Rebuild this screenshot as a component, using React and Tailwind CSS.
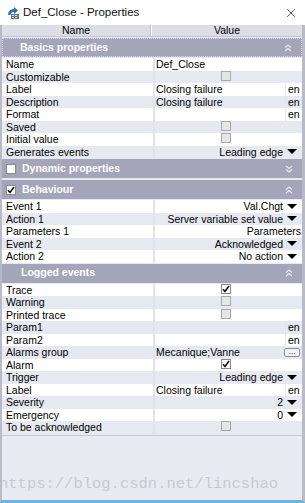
import { X } from 'lucide-react';

const rowsBasics = [
  { name: 'Name', kind: 'text', value: 'Def_Close' },
  { name: 'Customizable', kind: 'check' },
  { name: 'Label', kind: 'lang', value: 'Closing failure' },
  { name: 'Description', kind: 'lang', value: 'Closing failure' },
  { name: 'Format', kind: 'lang', value: '' },
  { name: 'Saved', kind: 'check' },
  { name: 'Initial value', kind: 'check' },
  { name: 'Generates events', kind: 'drop', value: 'Leading edge' },
];

const rowsBehaviour = [
  { name: 'Event 1', kind: 'drop', value: 'Val.Chgt' },
  { name: 'Action 1', kind: 'drop', value: 'Server variable set value' },
  { name: 'Parameters 1', kind: 'right', value: 'Parameters' },
  { name: 'Event 2', kind: 'drop', value: 'Acknowledged' },
  { name: 'Action 2', kind: 'drop', value: 'No action' },
];

const rowsLogged = [
  { name: 'Trace', kind: 'check', checked: true },
  { name: 'Warning', kind: 'check' },
  { name: 'Printed trace', kind: 'check' },
  { name: 'Param1', kind: 'lang', value: '' },
  { name: 'Param2', kind: 'lang', value: '' },
  { name: 'Alarms group', kind: 'more', value: 'Mecanique;Vanne' },
  { name: 'Alarm', kind: 'check', checked: true },
  { name: 'Trigger', kind: 'drop', value: 'Leading edge' },
  { name: 'Label', kind: 'lang', value: 'Closing failure' },
  { name: 'Severity', kind: 'drop', value: '2' },
  { name: 'Emergency', kind: 'drop', value: '0' },
  { name: 'To be acknowledged', kind: 'check' },
];

function Box({ checked, white }) {
  return (
    <span className={`w-[10px] h-[10px] border flex items-center justify-center ${white ? 'bg-white border-[#8a8a8a]' : 'bg-[#e6e6e6] border-[#a8a8a8]'}`}>
      {checked && (
        <svg width="8" height="8" viewBox="0 0 8 8">
          <path d="M1 4.2 L3 6.5 L7 1" stroke="#111" strokeWidth="1.6" fill="none" />
        </svg>
      )}
    </span>
  );
}

function Arrow() {
  return <span className="ml-[4px] w-0 h-0 border-l-[5px] border-r-[5px] border-t-[5px] border-l-transparent border-r-transparent border-t-black" />;
}

function Chevrons({ down }) {
  return (
    <svg width="8" height="8" viewBox="0 0 8 8" className="mr-[9px]">
      {down ? (
        <g stroke="#ececf2" strokeWidth="1.1" fill="none">
          <path d="M1 1 L4 3.5 L7 1" />
          <path d="M1 4.5 L4 7 L7 4.5" />
        </g>
      ) : (
        <g stroke="#ececf2" strokeWidth="1.1" fill="none">
          <path d="M1 3.5 L4 1 L7 3.5" />
          <path d="M1 7 L4 4.5 L7 7" />
        </g>
      )}
    </svg>
  );
}

function Section({ title, box, checked, down, focused }) {
  return (
    <div className="h-[21px] py-px">
      <div className={`h-[19px] bg-[#a4a5b9] flex items-center ${focused ? 'border border-dotted border-[#d4d4e0]' : ''}`}>
        {box ? (
          <span className="ml-[4px] mr-[6px]"><Box checked={checked} white /></span>
        ) : (
          <span className={focused ? 'w-[17px]' : 'w-[19px]'} />
        )}
        <span className="flex-1 text-white font-bold text-[10.5px]">{title}</span>
        <Chevrons down={down} />
      </div>
    </div>
  );
}

function Row({ r, i }) {
  const bg = i % 2 === 0 ? 'bg-white' : 'bg-[#e7e9f0]';
  let value = null;
  if (r.kind === 'text') value = <span className="pl-[1px]">{r.value}</span>;
  if (r.kind === 'check') value = <div className="flex-1 flex justify-center pr-[6px]"><Box checked={r.checked} white={r.checked} /></div>;
  if (r.kind === 'lang') value = (
    <div className="flex-1 flex">
      <span className="flex-1 pl-[1px]">{r.value}</span>
      <span className="w-[17px] pl-[2px] border-l border-[#e3e5ec]">en</span>
    </div>
  );
  if (r.kind === 'drop') value = (
    <div className="flex-1 flex items-center justify-end pr-[5px]">
      <span>{r.value}</span>
      <Arrow />
    </div>
  );
  if (r.kind === 'right') value = <div className="flex-1 text-right pr-[1px]">{r.value}</div>;
  if (r.kind === 'more') value = (
    <div className="flex-1 flex items-center">
      <span className="flex-1 pl-[1px]">{r.value}</span>
      <span className="mr-[2px] w-[16px] h-[9px] border border-[#8c8c8c] rounded-[2px] bg-[#f2f2f2] text-[8px] leading-[5px] text-center">...</span>
    </div>
  );
  return (
    <div className="h-[12.5px] flex text-[10.5px] leading-[12px] text-black">
      <div className={`w-[151px] pl-[4px] ${bg} truncate`}>{r.name}</div>
      <div className="w-[2px] bg-[#e2e3ea]" />
      <div className={`flex-1 flex ${bg}`}>{value}</div>
    </div>
  );
}

export default function App() {
  return (
    <div className="w-[305px] h-[503px] bg-[#e8eaf2] flex flex-col overflow-hidden" style={{ fontFamily: '"Liberation Sans", Arial, sans-serif' }}>
      <div className="h-[25px] bg-white flex items-center shrink-0">
        <svg width="14" height="14" viewBox="0 0 14 14" className="ml-[6px] mr-[3px]">
          <path d="M2 9 Q2 3 8 3 L8 1 L12 4.5 L8 8 L8 6 Q5 6 4.5 9 Z" fill="#2f6fc0" />
          <rect x="5" y="8" width="8" height="5" fill="#6d7380" />
          <path d="M6 9 h2 v1 h-2 z M9 9 h2 v1 h-2 z M6 11 h2 v1 h-2 z M9 11 h2 v1 h-2 z" fill="#d8dbe2" />
        </svg>
        <span className="flex-1 text-[11.5px] text-[#111]">Def_Close - Properties</span>
        <X size={14} strokeWidth={1.3} className="mr-[7px] text-[#222]" />
      </div>
      <div className="flex-1 flex flex-col border-l-2 border-r-[3px] border-[#b9bac6] border-b-[3px] border-b-[#6cb4de]">
        <div className="h-[12px] flex bg-[#dcdde5] border-b border-[#c4c5d0] text-[10.5px] leading-[11px] text-black shrink-0">
          <div className="w-[149px] text-center border-r border-[#c4c5d0]">Name</div>
          <div className="w-px bg-white" />
          <div className="flex-1 text-center">Value</div>
        </div>
        <Section title="Basics properties" focused />
        {rowsBasics.map((r, i) => <Row key={r.name} r={r} i={i} />)}
        <Section title="Dynamic properties" box down />
        <Section title="Behaviour" box checked />
        {rowsBehaviour.map((r, i) => <Row key={r.name} r={r} i={i} />)}
        <Section title="Logged events" />
        {rowsLogged.map((r, i) => <Row key={r.name + i} r={r} i={i} />)}
        <div className="h-px bg-[#c9cad4] mt-[1px]" />
        <div className="flex-1 flex items-end overflow-hidden">
          <div className="ml-[-3px] mb-[4px] text-[15.5px] text-[#c8c9cf] whitespace-nowrap" style={{ fontFamily: '"Liberation Mono", monospace' }}>https://blog.csdn.net/lincshao</div>
        </div>
      </div>
    </div>
  );
}
